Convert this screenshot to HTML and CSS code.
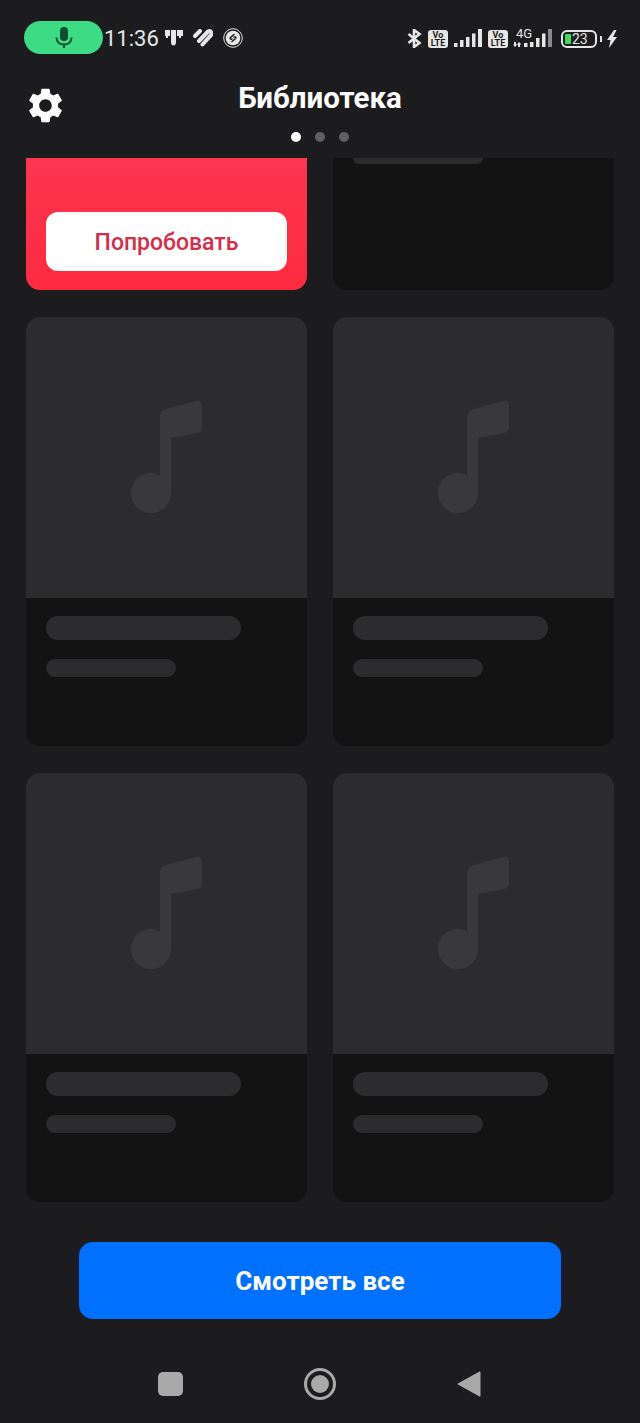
FILE: index.html
```html
<!DOCTYPE html>
<html lang="ru">
<head>
    <meta charset="UTF-8">
    <title>Библиотека</title>
    <link rel="stylesheet" href="styles.css">
</head>
<body>
    <div class="status-bar">
        <div class="mic-pill">
            <svg width="20" height="24" viewBox="0 0 20 24">
                <rect x="6" y="1" width="8" height="14" rx="4" fill="#124d30"/>
                <path d="M2.5 11.5c0 4.4 3.3 7 7.5 7s7.5-2.600 7.500-7M10 18.500V22" fill="none" stroke="#124d30" stroke-width="2"/>
            </svg>
        </div>
        <span class="clock">11:36</span>
        <svg class="icon-mts" width="18" height="18" viewBox="0 0 18 18">
            <path d="M0 1h5v6H3v2H1V7H0zM6 1h5v12.500c0 1.500-.8 3-2.500 3S6 15 6 13.500zM12 1h6v6h-2v2h-2V7h-2z" fill="#e6e6e6"/>
        </svg>
        <svg class="icon-heart" width="20" height="18" viewBox="0 0 20 18">
            <path d="M2 7l5-5M6 12l9-9.500c3-1.500 4 1.500 3 3.500l-8.500 9.500" fill="none" stroke="#e6e6e6" stroke-width="4" stroke-linecap="round"/>
        </svg>
        <svg class="icon-shazam" width="20" height="20" viewBox="0 0 20 20">
            <circle cx="10" cy="10" r="9.300" fill="none" stroke="#e6e6e6" stroke-width="1"/>
            <circle cx="10" cy="10" r="7.300" fill="#e6e6e6"/>
            <path d="M11 6.500L7.500 9.500c-1 1 .5 2.300 1.500 1.500M9 13.500l3.500-3c1-1-.5-2.300-1.500-1.500" fill="none" stroke="#1c1c1e" stroke-width="1.500" stroke-linecap="round"/>
        </svg>
        <div class="status-right">
            <svg class="icon-bt" width="15" height="19" viewBox="0 0 15 19">
                <path d="M1.500 5l11 9-5.500 4V1l5.500 4-11 9" fill="none" stroke="#e6e6e6" stroke-width="2.600"/>
            </svg>
            <div class="volte"><span>Vo</span><span>LTE</span></div>
            <svg class="icon-signal" width="28" height="18" viewBox="0 0 28 18">
                <path d="M0 14h3.500v4H0zM6 11h3.500v7H6zM12 8h3.500v10H12zM18 4.500h3.500V18H18zM24 0h4v18h-4z" fill="#e6e6e6"/>
            </svg>
            <div class="volte"><span>Vo</span><span>LTE</span></div>
            <div class="signal-4g">
                <span class="label-4g">4G</span>
                <svg width="39" height="18" viewBox="0 0 39 18">
                    <path d="M1 13h2v2.500h1.500L2 18l-2-2.500h1zM7 18H5v-2.500H3.800L6 13l2.500 2.500H7zM11 14h3.500v4H11zM17 13h3.500v5H17zM23 9h3.500v9H23zM29 4.500h3.500V18H29z" fill="#e6e6e6"/>
                    <path d="M35 0h4v18h-4z" fill="#8a8a8a"/>
                </svg>
            </div>
            <div class="battery">
                <div class="battery-fill"></div>
                <span>23</span>
            </div>
            <div class="battery-tip"></div>
            <svg class="icon-bolt" width="10" height="18" viewBox="0 0 10 18">
                <path d="M7 0L0 10h3.500L2 18l8-11H6l3.500-7z" fill="#e6e6e6"/>
            </svg>
        </div>
    </div>

    <div class="header">
        <svg class="gear" width="33" height="35" viewBox="2.600 2 18.800 20">
            <path d="M19.140 12.940c.04-.3.06-.61.06-.94 0-.32-.02-.64-.07-.94l2.030-1.580c.18-.14.23-.41.120-.61l-1.920-3.320c-.12-.22-.37-.29-.59-.22l-2.390.96c-.5-.38-1.030-.7-1.620-.94l-.36-2.540c-.04-.24-.24-.41-.48-.41h-3.840c-.24 0-.43.17-.47.41l-.36 2.540c-.59.24-1.130.57-1.620.94l-2.390-.96c-.22-.08-.47 0-.59.22L2.740 8.870c-.12.21-.08.47.12.61l2.030 1.580c-.05.3-.09.63-.09.94s.02.64.07.94l-2.030 1.580c-.18.14-.23.41-.12.61l1.920 3.320c.12.22.37.29.59.22l2.390-.96c.5.38 1.030.7 1.620.94l.36 2.540c.05.24.24.41.48.41h3.840c.24 0 .44-.17.47-.41l.36-2.540c.59-.24 1.130-.56 1.620-.94l2.390.96c.22.08.47 0 .59-.22l1.920-3.320c.12-.22.07-.47-.12-.61l-2.010-1.580zM12 15.600c-1.980 0-3.600-1.620-3.600-3.600s1.620-3.600 3.600-3.600 3.600 1.620 3.600 3.600-1.620 3.600-3.600 3.600z" fill="#fff"/>
        </svg>
        <h1 class="title">Библиотека</h1>
        <div class="dots">
            <span class="dot dot-active"></span>
            <span class="dot"></span>
            <span class="dot"></span>
        </div>
    </div>

    <div class="grid">
        <div class="promo-card">
            <div class="promo-button">Попробовать</div>
        </div>
        <div class="cut-card">
            <div class="cut-bar"></div>
        </div>

        <div class="card">
            <div class="cover">
                <svg width="72" height="115" viewBox="0 0 72 115"><circle cx="20" cy="93" r="20"/><path d="M29 93V17q0-6 6-8L65 1q6-1 6 5v21q0 5-5 6L40 38V93z"/></svg>
            </div>
            <div class="bar bar-long"></div>
            <div class="bar bar-short"></div>
        </div>
        <div class="card">
            <div class="cover">
                <svg width="72" height="115" viewBox="0 0 72 115"><circle cx="20" cy="93" r="20"/><path d="M29 93V17q0-6 6-8L65 1q6-1 6 5v21q0 5-5 6L40 38V93z"/></svg>
            </div>
            <div class="bar bar-long"></div>
            <div class="bar bar-short"></div>
        </div>
        <div class="card">
            <div class="cover">
                <svg width="72" height="115" viewBox="0 0 72 115"><circle cx="20" cy="93" r="20"/><path d="M29 93V17q0-6 6-8L65 1q6-1 6 5v21q0 5-5 6L40 38V93z"/></svg>
            </div>
            <div class="bar bar-long"></div>
            <div class="bar bar-short"></div>
        </div>
        <div class="card">
            <div class="cover">
                <svg width="72" height="115" viewBox="0 0 72 115"><circle cx="20" cy="93" r="20"/><path d="M29 93V17q0-6 6-8L65 1q6-1 6 5v21q0 5-5 6L40 38V93z"/></svg>
            </div>
            <div class="bar bar-long"></div>
            <div class="bar bar-short"></div>
        </div>
    </div>

    <div class="see-all">Смотреть все</div>

    <div class="nav-bar">
        <div class="nav-square"></div>
        <div class="nav-circle"><div class="nav-circle-inner"></div></div>
        <svg width="24" height="28" viewBox="0 0 24 28">
            <path d="M22.500 1.500L0 14l22.500 12.500q1 .5 1-1V2.500q0-1.500-1-1z" fill="#a9a9a9"/>
        </svg>
    </div>
</body>
</html>
```

FILE: styles.css
```css
* {
    box-sizing: border-box;
}
html, body {
    margin: 0;
    height: 1423px;
    overflow: hidden;
}
body {
    background: #1c1c1e;
    font-family: Roboto, "Liberation Sans", sans-serif;
    width: 640px;
}

/* status bar */
.status-bar {
    height: 76px;
    padding: 21px 0 0 24px;
    display: flex;
    align-items: flex-start;
    color: #e6e6e6;
}
.mic-pill {
    width: 79px;
    height: 33px;
    border-radius: 17px;
    background: #3ddc84;
    display: flex;
    align-items: center;
    justify-content: center;
}
.clock {
    margin-left: 1px;
    font-size: 22px;
    line-height: 36px;
}
.icon-mts {
    margin: 8px 0 0 6px;
}
.icon-heart {
    margin: 8px 0 0 10px;
}
.icon-shazam {
    margin: 7px 0 0 10px;
}
.status-right {
    margin-left: auto;
    padding: 7px 23px 0 0;
    display: flex;
    align-items: flex-start;
}
.icon-bt {
    margin: 1px 0 0 0;
}
.volte {
    width: 20px;
    height: 18px;
    margin: 2px 0 0 6px;
    border-radius: 3px;
    background: #e6e6e6;
    color: #1c1c1e;
    display: flex;
    flex-direction: column;
    align-items: center;
    font-size: 9px;
    font-weight: 700;
    line-height: 8px;
    padding-top: 1px;
}
.icon-signal {
    margin: 1px 0 0 6px;
}
.signal-4g {
    width: 39px;
    height: 19px;
    margin-left: 5px;
    display: flex;
    flex-direction: column;
}
.signal-4g svg {
    margin-top: -10px;
}
.label-4g {
    font-size: 13px;
    line-height: 11px;
    padding-left: 3px;
}
.battery {
    width: 36px;
    height: 18px;
    margin: 2px 0 0 9px;
    padding: 2px;
    border: 2px solid #e6e6e6;
    border-radius: 6px;
    display: flex;
    align-items: center;
    font-size: 14px;
    line-height: 13px;
}
.battery-fill {
    width: 6px;
    height: 10px;
    background: #3ddc5c;
    border-radius: 1px;
    margin-right: 1px;
}
.battery-tip {
    width: 2px;
    height: 6px;
    margin: 8px 0 0 3px;
    background: #e6e6e6;
}
.icon-bolt {
    margin: 2px 0 0 5px;
}

/* header */
.header {
    height: 82px;
    display: grid;
    grid-template-columns: 1fr auto 1fr;
    grid-template-rows: 42px auto;
    justify-items: center;
}
.gear {
    grid-column: 1;
    grid-row: 1 / 3;
    justify-self: start;
    margin: 12px 0 0 29px;
}
.title {
    grid-column: 2;
    grid-row: 1;
    margin: 0;
    color: #fff;
    font-size: 29.500px;
    font-weight: 700;
    line-height: 44px;
}
.dots {
    grid-column: 2;
    grid-row: 2;
    display: flex;
    gap: 14px;
    margin-top: 14px;
}
.dot {
    width: 10px;
    height: 10px;
    border-radius: 50%;
    background: #5f5f61;
}
.dot-active {
    background: #fff;
}

/* cards */
.grid {
    padding: 0 26px;
    display: grid;
    grid-template-columns: 281px 281px;
    grid-template-rows: 132px 429px 429px;
    column-gap: 26px;
    row-gap: 27px;
}
.promo-card {
    border-radius: 0 0 14px 14px;
    background: linear-gradient(#fd3550, #ff2a40);
    padding: 54px 20px 19px;
}
.promo-button {
    height: 59px;
    padding-top: 2px;
    border-radius: 12px;
    background: #fff;
    color: #d62d49;
    font-size: 23px;
    font-weight: 500;
    display: flex;
    align-items: center;
    justify-content: center;
}
.cut-card {
    border-radius: 0 0 14px 14px;
    background: #131313;
    padding: 0 20px;
}
.cut-bar {
    width: 130px;
    height: 6px;
    border-radius: 0 0 9px 9px;
    background: #2c2c2e;
}
.card {
    border-radius: 14px;
    background: #131313;
    overflow: hidden;
}
.cover {
    height: 281px;
    background: #2c2c2e;
    display: flex;
    justify-content: center;
    padding: 83px 0 0 0;
}
.cover svg {
    fill: #39393b;
}
.bar {
    margin-left: 20px;
    background: #2c2c2e;
}
.bar-long {
    width: 195px;
    height: 24px;
    margin-top: 18px;
    border-radius: 12px;
}
.bar-short {
    width: 130px;
    height: 18px;
    margin-top: 19px;
    border-radius: 9px;
}

/* bottom */
.see-all {
    width: 482px;
    height: 77px;
    margin: 40px 0 0 79px;
    padding-top: 1px;
    border-radius: 14px;
    background: #0070ff;
    color: #fff;
    font-size: 26px;
    font-weight: 700;
    display: flex;
    align-items: center;
    justify-content: center;
}
.nav-bar {
    margin-top: 49px;
    padding-left: 158px;
    height: 32px;
    display: flex;
    align-items: center;
    gap: 121px;
}
.nav-square {
    width: 25px;
    height: 24px;
    border-radius: 5px;
    background: #a9a9a9;
}
.nav-circle {
    width: 32px;
    height: 32px;
    border-radius: 50%;
    border: 3px solid #a9a9a9;
    display: flex;
    align-items: center;
    justify-content: center;
}
.nav-circle-inner {
    width: 18px;
    height: 18px;
    border-radius: 50%;
    background: #a9a9a9;
}
```
